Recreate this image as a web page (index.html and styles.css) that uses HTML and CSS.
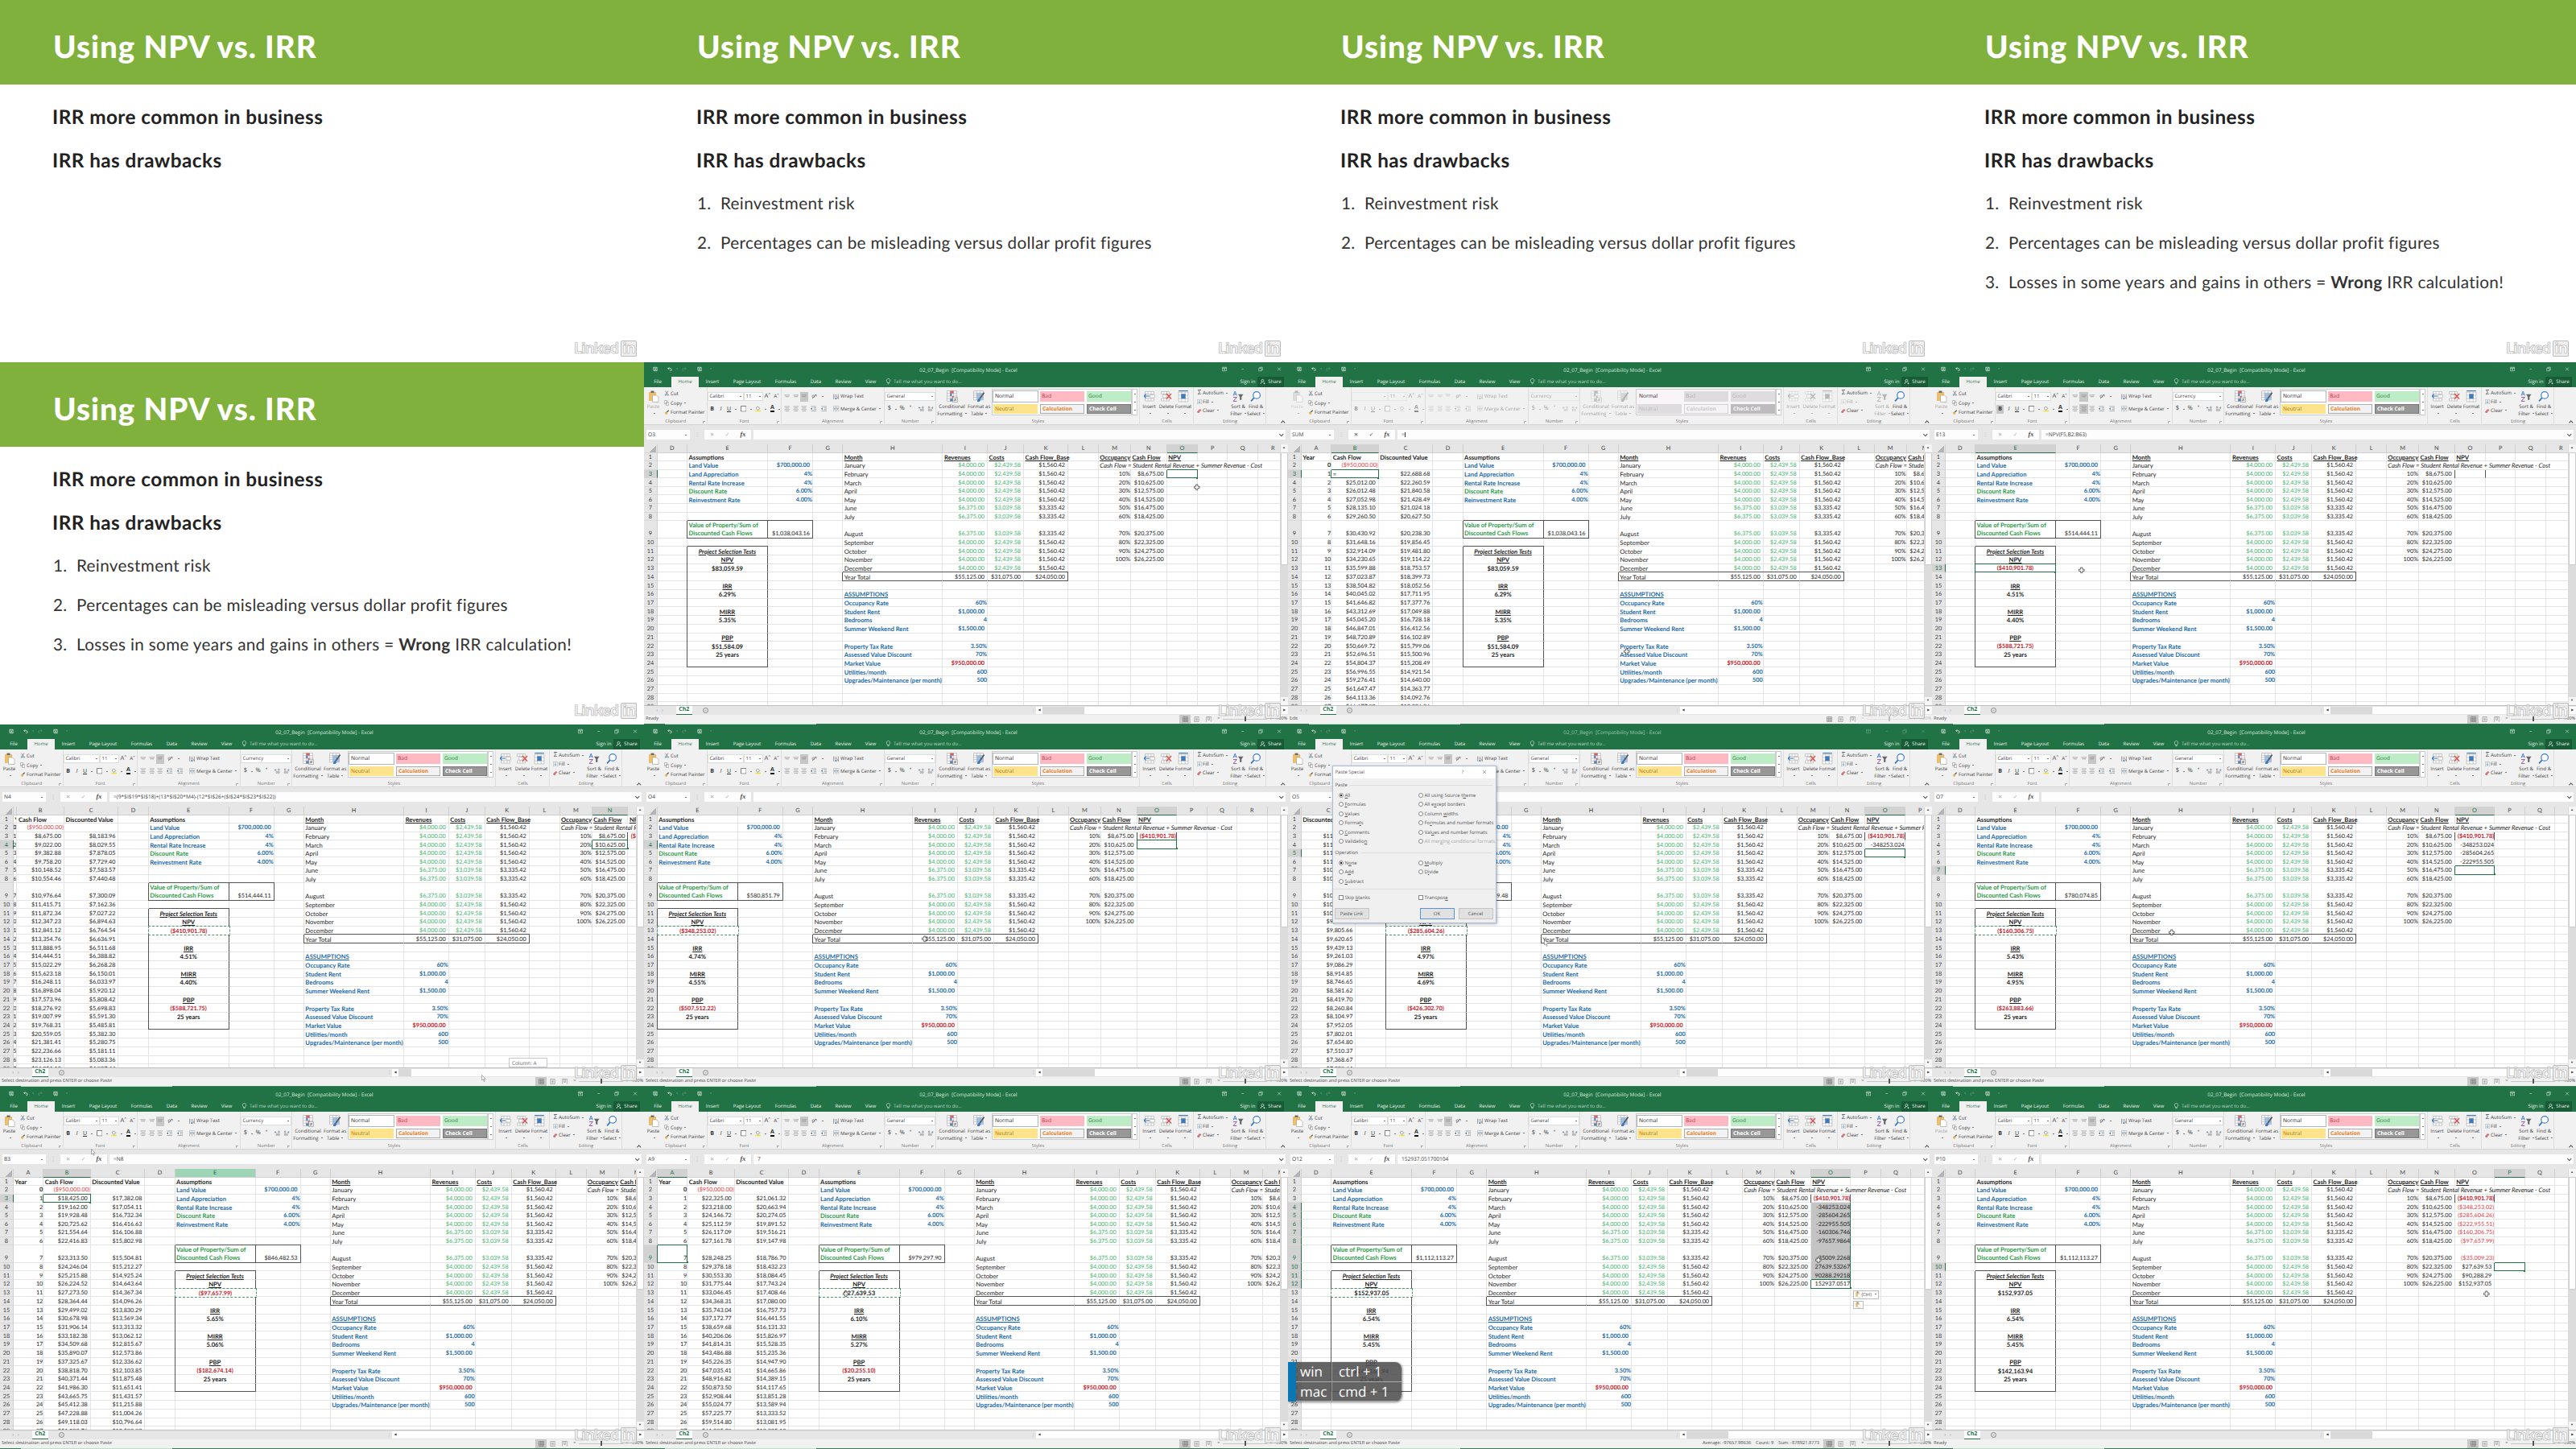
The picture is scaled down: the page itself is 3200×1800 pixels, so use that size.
FILE: index.html
```
<!DOCTYPE html>
<html lang="en">
<head>
    <meta charset="UTF-8">
    <meta name="viewport" content="width=device-width, initial-scale=1.0">
    <title>Using NPV vs. IRR</title>
    <link rel="stylesheet" href="styles.css">
</head>
<body>
    <!-- icons shared by every workbook frame -->
    <svg class="sprite" width="0" height="0">
        <symbol id="save" viewBox="0 0 16 16"><path d="M2 2h12v12H4l-2-2z M5 2v5h6V2 M5 14v-4h6v4" fill="none" stroke="currentColor" stroke-width="1.6"/></symbol>
        <symbol id="undo" viewBox="0 0 16 16"><path d="M6 2L2 6l4 4M2 6h7q5 0 5 4t-5 4" fill="none" stroke="currentColor" stroke-width="2"/></symbol>
        <symbol id="redo" viewBox="0 0 16 16"><path d="M10 2l4 4-4 4M14 6H7q-5 0-5 4t5 4" fill="none" stroke="currentColor" stroke-width="2"/></symbol>
        <symbol id="restore" viewBox="0 0 16 16"><path d="M2 5h9v9H2zM5 5V2h9v9h-3" fill="none" stroke="currentColor" stroke-width="1.4"/></symbol>
        <symbol id="ribbon-opts" viewBox="0 0 16 16"><path d="M1 2h14v12H1zM1 5h14M8 12V7M6 9l2-2 2 2" fill="none" stroke="currentColor" stroke-width="1.5"/></symbol>
        <symbol id="close" viewBox="0 0 16 16"><path d="M3 3l10 10M13 3L3 13" fill="none" stroke="currentColor" stroke-width="1.4"/></symbol>
        <symbol id="bulb" viewBox="0 0 16 20"><path d="M5 14q0-3-2-5a5.500 5.500 0 1 1 10 0q-2 2-2 5zM5.500 17h5" fill="none" stroke="currentColor" stroke-width="1.600"/></symbol>
        <symbol id="person" viewBox="0 0 16 16"><path d="M8 9a3.500 3.500 0 1 0 0-7 3.500 3.500 0 0 0 0 7zM2 15q0-6 6-6M10 13h5M12.500 10.500v5" fill="none" stroke="currentColor" stroke-width="1.600"/></symbol>
        <symbol id="paste" viewBox="0 0 26 30"><path class="board" d="M1 4h18v22H1z"/><path d="M6 1h8v5H6z" fill="#6d6d6d"/><path d="M10 12h10l5 5v12H10z" fill="#fff" stroke="#888"/></symbol>
        <symbol id="cut" viewBox="0 0 16 16"><path d="M4 1l6 10M12 1L6 11" stroke="#555" stroke-width="1.500" fill="none"/><circle cx="4.500" cy="13" r="2" fill="none" stroke="#2f6da8" stroke-width="1.400"/><circle cx="11.500" cy="13" r="2" fill="none" stroke="#2f6da8" stroke-width="1.400"/></symbol>
        <symbol id="copy" viewBox="0 0 16 16"><path d="M1 1h8v9H1zM6 6h8v9H6z" fill="#fff" stroke="#777" stroke-width="1.300"/></symbol>
        <symbol id="brush" viewBox="0 0 16 16"><path d="M1 9l5-4 5 5-4 5z" fill="#e3b55b"/><path d="M8 7l6-6" stroke="#555" stroke-width="3"/></symbol>
        <symbol id="grid" viewBox="0 0 16 16"><path d="M1 1h14v14H1z" fill="#fff" stroke="#555" stroke-width="1.600"/></symbol>
        <symbol id="bucket" viewBox="0 0 18 18"><path d="M3 7l5-5 6 6-6 5z" fill="#fff" stroke="#555" stroke-width="1.400"/><path d="M1 14h16v4H1z" fill="#f4de3a"/></symbol>
        <symbol id="lines" viewBox="0 0 16 16"><path d="M1 2h14M3 6h10M1 10h14M3 14h10" stroke="#8a8a8a" stroke-width="1.300"/></symbol>
        <symbol id="line2" viewBox="0 0 16 16"><path d="M1 4h14M3 8h10" stroke="#8a8a8a" stroke-width="1.500"/></symbol>
        <symbol id="indent" viewBox="0 0 16 16"><path d="M1 2h14M8 6h7M8 10h7M1 14h14" stroke="#8a8a8a" stroke-width="1.400"/><path d="M0 8l4-3v6z" fill="#2f6da8"/></symbol>
        <symbol id="orient" viewBox="0 0 16 16"><path d="M2 13L13 3M9 3h4v4" stroke="#555" stroke-width="1.300" fill="none"/><circle cx="5" cy="7" r="3" fill="none" stroke="#555" stroke-width="1.300"/></symbol>
        <symbol id="wrap" viewBox="0 0 16 16"><path d="M1 1v14M14 1v14M3 4h8M3 8h8q3 3 0 5H6" stroke="#777" stroke-width="1.300" fill="none"/><path d="M8 10v6l-4-3z" fill="#2f6da8"/></symbol>
        <symbol id="merge" viewBox="0 0 16 16"><path d="M1 1h14v14H1zM1 5h14M1 11h14M8 1v4M8 11v4" stroke="#999" fill="#fff"/><path d="M3 8h10M5 6L3 8l2 2M11 6l2 2-2 2" stroke="#2f6da8" fill="none" stroke-width="1.200"/></symbol>
        <symbol id="decimals" viewBox="0 0 18 16"><path d="M0 5h6M3 2L0 5l3 3" stroke="#2f6da8" stroke-width="1.400" fill="none"/><ellipse cx="13" cy="4" rx="2" ry="2.800" fill="none" stroke="#666" stroke-width="1.300"/><ellipse cx="7" cy="12" rx="2" ry="2.800" fill="none" stroke="#666" stroke-width="1.300"/><ellipse cx="13" cy="12" rx="2" ry="2.800" fill="none" stroke="#666" stroke-width="1.300"/></symbol>
        <symbol id="cond" viewBox="0 0 26 28"><path d="M1 1h22v24H1zM1 7h22M1 13h22M1 19h22M8 1v24M16 1v24" fill="#fff" stroke="#999"/><path d="M8 1h8v6H8zM12 13h4v6h-4z" fill="#d8636b"/><path d="M8 7h4v6H8zM8 19h8v6H8z" fill="#4a82bd"/><path d="M14 16h11v11H14z" fill="#fff" stroke="#777"/><path d="M16 20h7M16 23h7M22 18l-5 7" stroke="#444"/></symbol>
        <symbol id="table" viewBox="0 0 26 28"><path d="M1 1h22v21H1zM1 6h22M1 11h22M1 16h22M8 1v21M16 1v21" fill="#fff" stroke="#999"/><path d="M8 6h15v16H8z" fill="#8db4dc" opacity=".8"/><path d="M25 5L15 19" stroke="#555" stroke-width="3"/><path d="M9 26q1-8 6-8 4 4-1 8z" fill="#3c7abf"/></symbol>
        <symbol id="insert" viewBox="0 0 28 26"><path d="M3 1h22v6H3zM10 1v6M18 1v6M3 18h22v6H3zM10 18v6M18 18v6M16 9h11v7H16z" fill="#fff" stroke="#999"/><path d="M0 12h14M5 7l-5 5 5 5" stroke="#3c7abf" fill="none" stroke-width="2.400"/></symbol>
        <symbol id="delete" viewBox="0 0 28 26"><path d="M1 1h20v6H1zM8 1v6M15 1v6M1 18h20v6H1zM8 18v6M15 18v6M5 9h9v7H5z" fill="#fff" stroke="#999"/><path d="M14 6l12 13M26 6L14 19" stroke="#d64b43" fill="none" stroke-width="2.600"/></symbol>
        <symbol id="format" viewBox="0 0 26 28"><path d="M2 4h22v22H2zM2 11h22M2 19h22M9 4v22M17 4v22" fill="#fff" stroke="#999"/><path d="M8 8h10v11H8z" fill="#3c7abf"/><path d="M2 1h22" stroke="#3c7abf" stroke-width="2"/></symbol>
        <symbol id="fill" viewBox="0 0 16 16"><path d="M1 1h14v14H1z" fill="#fff" stroke="#777"/><path d="M8 3v8M5 8l3 4 3-4" stroke="#3c7abf" fill="none" stroke-width="1.800"/></symbol>
        <symbol id="clear" viewBox="0 0 16 14"><path d="M1 9l8-8 6 3-8 8z" fill="#d8707f"/><path d="M1 9l6 3v2L1 12z" fill="#a33c50"/></symbol>
        <symbol id="sort" viewBox="0 0 26 26"><path d="M13 8h12l-4 6v7h-4v-7z" fill="#666"/><path d="M2 11L6 1l4 10M3 8h6" stroke="#3c7abf" fill="none" stroke-width="1.700"/><path d="M2 15h8L2 24h8" stroke="#8a4fa0" fill="none" stroke-width="1.700"/></symbol>
        <symbol id="find" viewBox="0 0 26 26"><circle cx="15" cy="10" r="8" fill="#fff" stroke="#3c7abf" stroke-width="2.200"/><path d="M9 16l-7 8" stroke="#3c7abf" stroke-width="3.200"/></symbol>
        <symbol id="view-grid" viewBox="0 0 16 16"><path d="M1 1h14v14H1zM1 6h14M1 10.500h14M6 1v14M10.500 1v14" fill="none" stroke="#666" stroke-width="1.200"/></symbol>
        <symbol id="view-page" viewBox="0 0 16 16"><path d="M2 1h12v14H2zM5 5h6M5 8h6M5 11h6" fill="none" stroke="#777" stroke-width="1.200"/></symbol>
        <symbol id="view-break" viewBox="0 0 16 16"><path d="M1 15V1h14v14M6 1v9h4V1" fill="none" stroke="#777" stroke-width="1.200"/></symbol>
        <symbol id="cross" viewBox="0 0 18 18"><path d="M6 1h5v5h5v5h-5v5H6v-5H1V6h5z" fill="#fff" stroke="#333" stroke-width="1.600"/></symbol>
        <symbol id="arrow" viewBox="0 0 12 18"><path d="M1 1v13l3-3 2.500 6 2-1L6 10.500h4.500z" fill="#fff" stroke="#666" stroke-width="1"/></symbol>
    </svg>

    <main class="wall">
        <section class="slide">
            <h1>Using NPV vs. IRR</h1>
            <h2>IRR more common in business</h2>
            <h2>IRR has drawbacks</h2>
            <div class="watermark">Linked<span>in</span></div>
        </section>
        <section class="slide">
            <h1>Using NPV vs. IRR</h1>
            <h2>IRR more common in business</h2>
            <h2>IRR has drawbacks</h2>
            <ol>
                <li>Reinvestment risk</li>
                <li>Percentages can be misleading versus dollar profit figures</li>
            </ol>
            <div class="watermark">Linked<span>in</span></div>
        </section>
        <section class="slide">
            <h1>Using NPV vs. IRR</h1>
            <h2>IRR more common in business</h2>
            <h2>IRR has drawbacks</h2>
            <ol>
                <li>Reinvestment risk</li>
                <li>Percentages can be misleading versus dollar profit figures</li>
            </ol>
            <div class="watermark">Linked<span>in</span></div>
        </section>
        <section class="slide">
            <h1>Using NPV vs. IRR</h1>
            <h2>IRR more common in business</h2>
            <h2>IRR has drawbacks</h2>
            <ol>
                <li>Reinvestment risk</li>
                <li>Percentages can be misleading versus dollar profit figures</li>
                <li>Losses in some years and gains in others = <b>Wrong</b> IRR calculation!</li>
            </ol>
            <div class="watermark">Linked<span>in</span></div>
        </section>
        <section class="slide">
            <h1>Using NPV vs. IRR</h1>
            <h2>IRR more common in business</h2>
            <h2>IRR has drawbacks</h2>
            <ol>
                <li>Reinvestment risk</li>
                <li>Percentages can be misleading versus dollar profit figures</li>
                <li>Losses in some years and gains in others = <b>Wrong</b> IRR calculation!</li>
            </ol>
            <div class="watermark">Linked<span>in</span></div>
        </section>
    </main>
    <script src="script.js"></script>
</body>
</html>
```
FILE: styles.css
```
* {
    box-sizing: border-box;
}
body {
    margin: 0;
    background: #fff;
    text-rendering: geometricPrecision;
}
.sprite {
    position: absolute;
}
.wall {
    width: 3200px;
    display: grid;
    grid-template-columns: repeat(4, 800px);
    grid-auto-rows: 450px;
}

/* slides */
.slide {
    position: relative;
    background: #fff;
    color: #222;
    font-family: Lato, sans-serif;
    overflow: hidden;
}
.slide h1 {
    height: 105px;
    margin: 0 0 14px;
    padding: 6px 0 0 66px;
    background: #7fb13c;
    color: #fff;
    font-size: 38.5px;
    font-weight: 900;
    letter-spacing: 1px;
    line-height: 105px;
}
.slide h2 {
    margin: 0;
    padding-left: 65px;
    height: 54px;
    font-size: 24.3px;
    font-weight: 700;
    letter-spacing: 0.45px;
    line-height: 54px;
}
.slide ol {
    margin: 2px 0 0 66px;
    padding: 0;
    list-style: none;
    counter-reset: item;
    font-size: 20.7px;
    letter-spacing: 0.33px;
    line-height: 49px;
    color: #333;
}
.slide li {
    display: flex;
    white-space: pre;
}
.slide li::before {
    counter-increment: item;
    content: counter(item) ".";
    width: 29px;
}
.watermark {
    position: absolute;
    right: 9px;
    bottom: 7px;
    display: flex;
    align-items: center;
    gap: 3px;
    font: bold 18.5px/20px "Open Sans", sans-serif;
    letter-spacing: -1.2px;
    color: rgba(240, 240, 240, 0.9);
    -webkit-text-stroke: 0.6px rgba(150, 150, 150, 0.8);
}
.watermark span {
    width: 20px;
    height: 20px;
    line-height: 18px;
    text-align: center;
    background: rgba(235, 235, 235, 0.8);
    border: 1px solid rgba(165, 165, 165, 0.7);
    border-radius: 2px;
    color: #fff;
}

/* workbook window */
.book {
    position: relative;
    height: 450px;
    overflow: hidden;
    display: flex;
    flex-direction: column;
    background: #e6e6e6;
    font: 6.1px/1 "Open Sans", sans-serif;
    color: #444;
    white-space: nowrap;
}
.titlebar {
    height: 17.5px;
    display: grid;
    grid-template-columns: 22px 14px 4px 14px 24px 4px 1fr 23px 23px 22px 23px;
    align-items: center;
    justify-items: center;
    padding: 0 0 1px 3px;
    background: #217346;
    color: #e9f3ed;
}
.titlebar svg {
    width: 6px;
    height: 7px;
}
.titlebar .faint {
    opacity: 0.25;
}
.titlebar .name {
    padding: 3px 0 0 12px;
    font-size: 6.3px;
    color: #d3e6da;
}
.inactive .titlebar .name {
    color: #9cc4ad;
}
.inactive .win {
    opacity: 0.35;
}
.tabs {
    height: 13.5px;
    display: grid;
    grid-template-columns: 34px 34px 34px 52px 44px 31px 37px 31px 13px 1fr 24px 33px;
    align-items: center;
    justify-items: center;
    padding-right: 5px;
    background: #217346;
    color: #e4f1e9;
}
.tabs .active {
    height: 100%;
    width: 100%;
    display: grid;
    place-items: center;
    background: #f1f1f1;
    color: #3c7a57;
}
.tabs svg {
    width: 7px;
    height: 8px;
}
.tabs .tell {
    justify-self: start;
    color: #b3d1c0;
}
.tabs .share {
    width: 100%;
    height: 12.5px;
    display: flex;
    align-items: center;
    justify-content: center;
    gap: 3px;
    background: #185c37;
}
.ribbon {
    height: 47px;
    display: grid;
    grid-template-columns: 78.5px 92px 128px 64.5px 253px 67px 90px 27px;
    background: #f1f1f1;
    border-bottom: 1px solid #d5d5d5;
}
.group {
    display: flex;
    flex-direction: column;
    border-right: 1px solid #dedede;
}
.group:last-child {
    border: 0;
}
.group .body {
    height: 38px;
    display: grid;
    align-content: start;
}
.group .label {
    height: 9px;
    display: grid;
    grid-template-columns: 1fr 7px;
    align-items: center;
    justify-items: center;
    padding: 1px 0 0 8px;
    font-size: 5.7px;
    color: #777;
}
.label i {
    width: 3px;
    height: 3px;
    border-left: 1px solid #aaa;
    border-top: 1px solid #aaa;
}
.line {
    display: grid;
    align-items: center;
    justify-items: center;
    height: 13px;
}
.dd::after {
    content: "";
    display: inline-block;
    width: 2px;
    height: 1px;
    margin: 0 0 1.5px 3px;
    background: #777;
}
.pick {
    width: 2px;
    height: 1px;
    background: #777;
}
.big {
    display: grid;
    justify-items: center;
    align-content: start;
    grid-template-rows: 18px 8.5px 8.5px;
    align-items: center;
    padding-top: 2px;
}
.big svg {
    width: 14px;
    height: 15px;
}
.clip .body {
    grid-template-columns: 23px 1fr;
}
.clip .list {
    padding-top: 2px;
}
.clip .line {
    grid-template-columns: 10px auto;
    justify-content: start;
    height: 11.8px;
}
.clip svg.s {
    width: 6.5px;
    height: 7px;
}
.board {
    fill: #ecbf6b;
}
.nopaste .board {
    fill: #d5d5d5;
}
.nopaste .paste {
    color: #aaa;
}
.combo {
    width: 100%;
    height: 11.5px;
    display: flex;
    align-items: center;
    justify-content: space-between;
    padding: 0 2px;
    background: #fff;
    border: 0.5px solid #ddd;
}
.font .body,
.align .body,
.num .body {
    padding-top: 5px;
    row-gap: 2.5px;
}
.font .l1 {
    grid-template-columns: 45px 24px 12px 10px;
}
.font .l2 {
    grid-template-columns: 12px 10px 10px 6px 14px 4px 15px 3px 14px 3px;
    font-size: 7px;
    color: #333;
}
.font .l1 .grow {
    font-size: 7.5px;
}
.font .ink {
    border-bottom: 2px solid #111;
    line-height: 6px;
}
.font .on {
    width: 9px;
    height: 11px;
    display: grid;
    place-items: center;
    background: #c6c6c6;
}
.line svg {
    width: 7.5px;
    height: 7.5px;
}
.align .l1 {
    grid-template-columns: 10.5px 10.5px 10.5px 15px 5px 10px 10px auto;
    justify-content: start;
    padding-left: 2px;
}
.align .l2 {
    grid-template-columns: 10.5px 10.5px 10.5px 14px 11px 5px 10px auto;
    justify-content: start;
    padding-left: 2px;
}
.align .on {
    width: 10.5px;
    height: 12px;
    display: grid;
    place-items: center;
    background: #c6c6c6;
}
.flip {
    transform: scaleX(-1);
}
.num .l2 {
    grid-template-columns: 13px 3px 12px 9px 4px 11px 11px;
    font-size: 7.5px;
}
.styles .body {
    grid-template-columns: 39px 28px 2px 174px 7px;
}
.gallery {
    height: 33px;
    margin-top: 2px;
    padding: 2px 1px;
    display: grid;
    grid-template-columns: repeat(3, 55px);
    grid-template-rows: 12.5px 12.5px;
    gap: 3px;
    background: #fff;
    border: 0.5px solid #ccc;
}
.gallery span {
    padding: 3px 2px 0;
    font-size: 6.6px;
}
.gallery .normal {
    color: #222;
    outline: 1.3px solid #b5b5b5;
}
.gallery .bad {
    background: #ffb9c2;
    color: #b53a4a;
}
.gallery .good {
    background: #bdecc6;
    color: #2c7d3c;
}
.gallery .neutral {
    background: #fde48c;
    color: #a57516;
}
.gallery .calc {
    background: #f2f2f2;
    color: #e8811f;
    border: 0.7px solid #aaa;
    font-weight: bold;
    padding-top: 2px;
}
.gallery .check {
    background: #979797;
    color: #fff;
    border: 1px solid #777;
    font-weight: bold;
    padding-top: 2px;
}
.spin {
    height: 33px;
    margin-top: 2px;
    display: flex;
    flex-direction: column;
    justify-content: space-around;
    align-items: center;
    background: #fff;
    border: 0.5px solid #ccc;
}
.cells .body {
    grid-template-columns: 23px 20px 22px;
}
.edit .body {
    grid-template-columns: 44px 22px 22px;
}
.edit .list {
    padding: 2px 0 0 3px;
}
.edit .line {
    grid-template-columns: 8px auto;
    justify-content: start;
    height: 10.8px;
}
.edit .sigma {
    font-size: 8px;
}
.edit .line svg {
    width: 6px;
    height: 6.5px;
}
.tail {
    flex-direction: row;
    align-items: flex-end;
    justify-content: flex-end;
    padding: 0 4px 2px 0;
}
.chev {
    width: 3.5px;
    height: 3.5px;
    margin: 0 1px;
    border: solid #555;
    border-width: 1px 0 0 1px;
    transform: rotate(45deg);
}
.chev.down {
    transform: rotate(225deg);
}
.editing .dim,
.editing .gallery span {
    filter: grayscale(1);
    opacity: 0.45;
}
.editing .combo,
.editing .gallery {
    background: #f8f4f8;
}
.editing .gallery .bad,
.editing .gallery .good,
.editing .gallery .neutral {
    background: #c3bfc3;
}
.editing .gallery .check {
    background: #777;
}
.editing .gallery .normal {
    filter: none;
    opacity: 1;
    outline: 0;
}

/* formula bar */
.formula {
    height: 24px;
    display: grid;
    grid-template-columns: 54px 18px 58px 3px 661px;
    justify-content: start;
    align-items: center;
    padding: 0 0 0 3px;
}
.formula > div {
    height: 12px;
    display: flex;
    align-items: center;
    background: #fdfdfd;
    font-size: 6.6px;
}
.formula > div.dots {
    background: none;
    justify-content: center;
    color: #aaa;
}
.formula .ref {
    justify-content: space-between;
    padding: 0 4px 0 2px;
}
.formula .fx {
    justify-content: space-around;
    color: #aaa;
}
.formula .fx i {
    color: #444;
    font-family: "Liberation Serif", serif;
    font-weight: bold;
    font-size: 8px;
}
.editing .formula .fx {
    color: #444;
}
.formula .text {
    grid-column: 5;
    justify-content: space-between;
    padding: 0 3px 0 5px;
}
.caret {
    border-right: 0.6px solid #333;
}

/* sheet */
.pane {
    height: 324px;
    display: flex;
}
.grid {
    width: 790px;
    overflow: hidden;
    background: #fff;
    font-family: Lato, sans-serif;
    font-size: 7.65px;
    color: #222;
}
.row {
    display: flex;
    width: 1200px;
    height: 10.73px;
}
.row.top {
    height: 10.58px;
}
.row.tall {
    height: 21.4px;
}
.row.head {
    height: 10.6px;
}
.cell {
    flex: none;
    height: 100%;
    display: flex;
    align-items: flex-end;
    padding: 0 1.5px;
    border-right: 1px solid #e4e4e4;
    border-bottom: 1px solid #e4e4e4;
    line-height: 8.4px;
    width: var(--w);
}
.head .cell,
.cell.no {
    background: #e6e6e6;
    border-color: #cfcfcf;
    justify-content: center;
    padding: 0;
    font-size: 7.3px;
    color: #444;
}
.cell.no {
    width: 16.8px;
    border-bottom-color: #d8d8d8;
}
.head .cell.hot,
.cell.no.hot {
    background: #d2d2d2;
    color: #217346;
}
.head .cell.hot {
    border-bottom: 1.5px solid #217346;
}
.cell.no.hot {
    border-right: 1.5px solid #217346;
}
.head .cell.over {
    background: #9fd5b7;
    color: #217346;
}
.corner {
    width: 9px;
    height: 8px;
    margin-left: 5px;
    background: linear-gradient(135deg, transparent 50%, #b4b4b4 50%);
}
.w-A { --w: 37.5px; }
.w-B { --w: 58.5px; }
.w-C { --w: 67.6px; }
.w-D { --w: 37.2px; }
.w-E { --w: 100px; }
.w-F { --w: 56px; }
.w-G { --w: 37.2px; }
.w-H { --w: 124.3px; }
.w-I { --w: 55.6px; }
.w-J { --w: 45px; }
.w-K { --w: 55px; }
.w-L { --w: 38.2px; }
.w-M { --w: 39.8px; }
.w-N { --w: 44.7px; }
.w-O { --w: 38.2px; }
.wide .w-O { --w: 49.5px; }
.w-P, .w-Q, .w-R, .w-S { --w: 37.5px; }
.shifted .w-A {
    --w: 4.6px;
    overflow: hidden;
}
.cell.r { justify-content: flex-end; padding-right: 0; font-size: 7.25px; }
.cell.m { justify-content: flex-end; padding-right: 3px; font-size: 7.25px; }
.cell.c { justify-content: center; }
.cell.b { font-weight: 700; }
.cell.i { font-style: italic; }
.cell.u span { text-decoration: underline; }
.cell.blue { color: #1b6aa6; }
.cell.grn { color: #1f9d45; }
.cell.rev { color: #3fb36d; }
.cell.red { color: #c4161f; font-size: 7.25px; }
.cell.loss { color: #da3c46; }
.cell.note { padding-left: 1px; }
.cell.note span {
    background: #fff;
    z-index: 1;
}
.cell.note.i {
    font-size: 7.75px;
}
.cell.two {
    white-space: pre;
    line-height: 10.4px;
}
.cell.bl { box-shadow: -1px 0 0 #555; }
.cell.br { border-right-color: #555; }
.cell.bb { border-bottom-color: #555; }
.cell.bt { box-shadow: 0 -1px 0 #555; }
.cell.bl.bt { box-shadow: -1px 0 0 #555, 0 -1px 0 #555; }
.cell.sel {
    position: relative;
    border-color: #217346;
    box-shadow: -1px 0 0 #217346, 0 -1px 0 #217346;
    z-index: 2;
}
.cell.sel::after {
    content: "";
    position: absolute;
    right: -1.5px;
    bottom: -1.5px;
    width: 2px;
    height: 2px;
    background: #217346;
}
.cell.ants {
    border: 0;
    outline: 1px dashed #4f9470;
    outline-offset: -0.5px;
    line-height: 9.4px;
    box-shadow: none;
}
.cell.shade {
    background: #c4c4c4;
    border-color: #c4c4c4;
    border-right-color: #217346;
}
.vscroll {
    width: 10px;
    display: flex;
    flex-direction: column;
    align-items: center;
    background: #dcdcdc;
}
.vscroll .btn {
    width: 9px;
    height: 10px;
    background: #f6f6f6;
    display: grid;
    place-items: center;
    font-size: 4px;
}
.vscroll .thumb {
    width: 9px;
    height: 140px;
    margin-bottom: auto;
    background: #fdfdfd;
    border: 0.5px solid #ccc;
}

/* tab strip and status bar */
.strip {
    height: 12px;
    display: grid;
    grid-template-columns: 39.5px 20.5px 33px 1fr 7px 8px 296px 9px;
    align-items: center;
    justify-items: center;
    border-top: 1px solid #bdbdbd;
    color: #999;
}
.strip .sheet {
    width: 100%;
    height: 11px;
    background: #fff;
    border-bottom: 1.3px solid #217346;
    color: #217346;
    font-size: 7px;
    font-weight: bold;
    line-height: 10px;
    text-align: center;
}
.strip .plus {
    width: 7px;
    height: 7px;
    border: 0.7px solid #888;
    border-radius: 50%;
    line-height: 5.5px;
    text-align: center;
}
.strip .btn {
    width: 8px;
    height: 9px;
    background: #fdfdfd;
    font-size: 4px;
    line-height: 9px;
    text-align: center;
    color: #444;
}
.strip .track {
    width: 100%;
    height: 9px;
    background: #d9d9d9;
    display: flex;
    justify-content: flex-end;
}
.strip .thumb {
    height: 9px;
    background: #fdfdfd;
}
.status {
    height: 10.5px;
    display: grid;
    grid-template-columns: 515px 150px 14px 15px 15px 10px 55px 10px 1fr;
    align-items: center;
    justify-items: center;
    background: #f1f1f1;
    font-size: 5.7px;
}
.status .msg {
    justify-self: start;
    padding-left: 2px;
}
.status .sum {
    justify-self: start;
    white-space: pre;
}
.status svg {
    width: 7px;
    height: 7px;
}
.status .on {
    width: 14px;
    height: 10.5px;
    display: grid;
    place-items: center;
    background: #c8c8c8;
}
.status .zoom {
    width: 100%;
    display: grid;
    place-items: center;
    height: 7px;
    background: linear-gradient(#aaa, #aaa) center / 100% 0.6px no-repeat;
}
.status .zoom i {
    width: 2px;
    height: 6px;
    background: #555;
}
.editing .status .on {
    background: none;
}
.editing .status .z {
    opacity: 0.35;
}
.base {
    height: 1.5px;
    background: linear-gradient(90deg, #2f7b53 26px, #b9dfc8 26px 214px, #2f7b53 214px);
}

/* things floating above the sheet */
.pointer {
    position: absolute;
    width: 8px;
    height: 9px;
}
.pointer.arrow {
    width: 6px;
    height: 9px;
}
.tip {
    position: absolute;
    left: 632px;
    top: 414px;
    width: 48px;
    height: 12px;
    background: #fff;
    border: 0.6px solid #c8c8c8;
    line-height: 11px;
    padding-left: 3px;
    font-size: 6.4px;
    color: #666;
}
.paste-tags {
    position: absolute;
    left: 702px;
    top: 253px;
    display: grid;
    gap: 2px;
}
.paste-tags div {
    height: 10.5px;
    display: flex;
    align-items: center;
    gap: 1px;
    justify-self: start;
    padding: 0 2px;
    background: #fff;
    border: 0.5px solid #bbb;
    font-size: 5.5px;
}
.paste-tags svg {
    width: 6.5px;
    height: 8px;
}
.keys {
    position: absolute;
    left: 0;
    top: 342px;
    width: 141px;
    height: 49px;
    display: grid;
    grid-template-columns: 45px 1fr;
    grid-template-rows: 24.5px 24.5px;
    border-left: 10px solid #0a77b5;
    border-radius: 0 8px 8px 0;
    background: rgba(78, 78, 78, 0.88);
    box-shadow: 1px 1px 3px rgba(0, 0, 0, 0.5);
    color: #fff;
    font: 17px/23px "Open Sans", sans-serif;
    overflow: hidden;
}
.keys span {
    padding-left: 8px;
    border-bottom: 0.6px solid #aaa;
}
.keys span:nth-child(odd) {
    padding-left: 5px;
    border-right: 1px solid #999;
}
.dialog {
    position: absolute;
    left: 54.5px;
    top: 50.5px;
    width: 204px;
    height: 196px;
    background: #f0f0f0;
    border: 1px solid #a9bdd6;
    box-shadow: 1px 1px 3px rgba(0, 0, 0, 0.3);
    font-size: 6px;
    color: #555;
}
.dialog .bar {
    height: 15.5px;
    display: grid;
    grid-template-columns: 1fr 25px 15px;
    align-items: center;
    padding: 0 2px 0 3px;
    background: #fff;
}
.dialog .bar svg {
    width: 6px;
    height: 6px;
}
.dialog .cap {
    height: 16px;
    display: flex;
    align-items: center;
    gap: 3px;
    padding-left: 3px;
}
.dialog .cap::after {
    content: "";
    flex: 1;
    height: 0.6px;
    margin-right: 4px;
    background: #ddd;
}
.dialog .opts {
    display: grid;
    grid-template-columns: 99px 1fr;
    grid-auto-rows: 11.5px;
    align-items: center;
    padding: 0 0 0 7px;
    margin-top: -1px;
}
.dialog .opts.checks {
    height: 19px;
    margin-top: 3.5px;
    border-top: 0.6px solid #ddd;
    grid-auto-rows: 19px;
}
.dialog label {
    display: flex;
    align-items: center;
    gap: 2px;
}
.dialog label i {
    width: 6px;
    height: 6px;
    border: 0.7px solid #888;
    border-radius: 50%;
    background: #fff;
}
.dialog label.on i {
    background: radial-gradient(#222 40%, #fff 45%);
}
.dialog label.off {
    color: #aaa;
}
.dialog .checks i {
    border-radius: 0;
}
.dialog .btns {
    display: grid;
    grid-template-columns: 43px 53px 43px 43px;
    column-gap: 5px;
    height: 13.5px;
    margin: 5px 0 0 2px;
}
.dialog .btns span {
    display: grid;
    place-items: center;
    background: #e1e1e1;
    border: 0.6px solid #c4c4c4;
}
.dialog .btns .ok {
    grid-column: 3;
    border: 1px solid #5b95d0;
}
```
FILE: script.js
```
var LETTERS = 'ABCDEFGHIJKLMNOPQRS'.split('');
var MONTHS = ['January', 'February', 'March', 'April', 'May', 'June', 'July', 'August', 'September', 'October', 'November', 'December'];
var LOSSES = { O3: ['($410,901.78)', 'b red r'] };

// One entry per workbook frame
var frames = [
    { from: 'D', ref: 'O3', text: '', base: 24050, value: '$1,038,043.16', npv: '$83,059.59', irr: '6.29%', mirr: '5.35%', pbp: '$51,584.09',
      format: 'General', thumb: 244, msg: 'Ready', nopaste: true, pointer: ['cross', 683, 151] },
    { from: 'A', ref: 'B3', name: 'SUM', text: '=', base: 24050, value: '$1,038,043.16', npv: '$83,059.59', irr: '6.29%', mirr: '5.35%', pbp: '$51,584.09',
      format: 'Currency', thumb: 296, msg: 'Edit', nopaste: true, editing: true, pointer: ['cross', 417, 355] },
    { from: 'D', ref: 'E13', text: '=NPV(F5,B2:B63)', base: 8675, value: '$514,444.11', npv: '($410,901.78)', irr: '4.51%', mirr: '4.40%', pbp: '($588,721.75)',
      format: 'Currency', thumb: 244, msg: 'Ready', nopaste: true, bold: true, pointer: ['cross', 182, 254] },
    { from: 'A', shifted: true, ref: 'N4', text: '=(9*$I$19*$I$18)+(13*$I$20*M4)-(12*$I$26+($I$24*$I$23*$I$22))', base: 8675, value: '$514,444.11', npv: '($410,901.78)', irr: '4.51%', mirr: '4.40%', pbp: '($588,721.75)',
      format: 'Currency', thumb: 280, ants: true, wide: true, cells: LOSSES, tip: 'Column: A', pointer: ['arrow', 598, 435] },
    { from: 'E', ref: 'O4', text: '', base: 10625, value: '$580,851.79', npv: '($348,253.02)', irr: '4.74%', mirr: '4.55%', pbp: '($507,512.22)',
      format: 'General', thumb: 231, ants: true, wide: true, cells: LOSSES, pointer: ['cross', 345, 262] },
    { from: 'C', ref: 'O5', text: '', base: 12575, value: '$647,259.48', npv: '($285,604.26)', irr: '4.97%', mirr: '4.69%', pbp: '($426,302.70)',
      format: 'General', thumb: 257, ants: true, wide: true, dialog: true, pointer: ['arrow', 318, 267],
      cells: { O3: LOSSES.O3, O4: ['-348253.024', 'r'] } },
    { from: 'D', ref: 'O7', text: '', base: 16475, value: '$780,074.85', npv: '($160,306.75)', irr: '5.43%', mirr: '4.95%', pbp: '($263,883.66)',
      format: 'General', thumb: 244, ants: true, wide: true, pointer: ['cross', 294, 254],
      cells: { O3: LOSSES.O3, O4: ['-348253.024', 'r'], O5: ['-285604.265', 'r'], O6: ['-222955.505', 'r'] } },
    { from: 'A', ref: 'B3', text: '=N8', base: 18425, value: '$846,482.53', npv: '($97,657.99)', irr: '5.65%', mirr: '5.06%', pbp: '($182,674.14)',
      format: 'Currency', thumb: 296, ants: true, over: 'E', pointer: ['arrow', 113, 77] },
    { from: 'A', ref: 'A9', text: '7', base: 22325, value: '$979,297.90', npv: '$27,639.53', irr: '6.10%', mirr: '5.27%', pbp: '($20,255.10)',
      format: 'General', thumb: 296, ants: true, pointer: ['cross', 247, 253] },
    { from: 'D', ref: 'O12', text: '152937.051700104', base: 26225, value: '$1,112,113.27', npv: '$152,937.05', irr: '6.54%', mirr: '5.45%', pbp: '$142,163.94',
      format: 'General', thumb: 244, ants: true, wide: true, keys: true, pointer: ['cross', 655, 211],
      sum: 'Average: -97657.98636    Count: 9    Sum: -878921.8773', hotRows: [4, 12],
      cells: { O3: LOSSES.O3, O4: ['-348253.024', 'r shade'], O5: ['-285604.265', 'r shade'], O6: ['-222955.505', 'r shade'], O7: ['-160306.746', 'r shade'],
               O8: ['-97657.9864', 'r shade'], O9: ['-35009.2268', 'r shade'], O10: ['27639.53267', 'r shade'], O11: ['90288.29218', 'r shade'], O12: ['152937.0517', 'r'] } },
    { from: 'D', ref: 'P10', text: '', base: 26225, value: '$1,112,113.27', npv: '$152,937.05', irr: '6.54%', mirr: '5.45%', pbp: '$142,163.94',
      format: 'General', thumb: 244, msg: 'Ready', nopaste: true, wide: true, pointer: ['cross', 685, 253],
      cells: { O3: LOSSES.O3, O4: ['($348,253.02)', 'loss r'], O5: ['($285,604.26)', 'loss r'], O6: ['($222,955.51)', 'loss r'], O7: ['($160,306.75)', 'loss r'],
               O8: ['($97,657.99)', 'loss r'], O9: ['($35,009.23)', 'loss r'], O10: ['$27,639.53', 'm'], O11: ['$90,288.29', 'm'], O12: ['$152,937.05', 'm'] } }
];

function icon(id, cls) {
    return '<svg class="' + (cls || '') + '"><use href="#' + id + '"/></svg>';
}

function money(n) {
    return '$' + n.toLocaleString('en-US', { minimumFractionDigits: 2, maximumFractionDigits: 2 });
}

function sign(text) {
    return text.charAt(0) === '(' ? ' red' : '';
}

function sheetCells(f) {
    var c = {
        A1: ['Year', 'b'], B1: ['Cash Flow', 'b'], C1: ['Discounted Value', 'b'], E1: ['Assumptions', 'b'],
        H1: ['Month', 'b u'], I1: ['Revenues', 'b u'], J1: ['Costs', 'b u'], K1: ['Cash Flow_Base', 'b u'],
        M1: ['Occupancy', 'b u note'], N1: ['Cash Flow', 'b u'], O1: ['NPV', 'b u'],
        A2: ['0', 'b r'], B2: ['($950,000.00)', 'r loss'],
        E2: ['Land Value', 'b blue'], F2: ['$700,000.00', 'b blue m'],
        E3: ['Land Appreciation', 'b blue'], F3: ['4%', 'b blue r'],
        E4: ['Rental Rate Increase', 'b blue'], F4: ['4%', 'b blue r'],
        E5: ['Discount Rate', 'b grn'], F5: ['6.00%', 'b blue r'],
        E6: ['Reinvestment Rate', 'b blue'], F6: ['4.00%', 'b blue r'],
        M2: ['Cash Flow = Student Rental Revenue + Summer Revenue - Cost', 'i note'],
        E9: ['Value of Property/Sum of\nDiscounted Cash Flows', 'b grn two bl br bb bt'], F9: [f.value, 'm br bb bt'],
        E11: ['Project Selection Tests', 'b i u c bl bt br'], E12: ['NPV', 'b u c bl br'], E13: [f.npv, 'b c bl br' + sign(f.npv)],
        E14: ['', 'bl br'], E15: ['IRR', 'b u c bl br'], E16: [f.irr, 'b c bl br'], E17: ['', 'bl br'],
        E18: ['MIRR', 'b u c bl br'], E19: [f.mirr, 'b c bl br'], E20: ['', 'bl br'],
        E21: ['PBP', 'b u c bl br'], E22: [f.pbp, 'b c bl br' + sign(f.pbp)], E23: ['25 years', 'b c bl br'], E24: ['', 'bl br bb'],
        H14: ['Year Total', 'bl bt bb'], I14: ['$55,125.00', 'm bt bb'], J14: ['$31,075.00', 'm bt bb'], K14: ['$24,050.00', 'm bt bb br'],
        H16: ['ASSUMPTIONS', 'b u blue'],
        H17: ['Occupancy Rate', 'b blue'], I17: ['60%', 'b blue r'],
        H18: ['Student Rent', 'b blue'], I18: ['$1,000.00', 'b blue m'],
        H19: ['Bedrooms', 'b blue'], I19: ['4', 'b blue r'],
        H20: ['Summer Weekend Rent', 'b blue'], I20: ['$1,500.00', 'b blue m'],
        H22: ['Property Tax Rate', 'b blue'], I22: ['3.50%', 'b blue r'],
        H23: ['Assessed Value Discount', 'b blue'], I23: ['70%', 'b blue r'],
        H24: ['Market Value', 'b blue'], I24: ['$950,000.00', 'b red m'],
        H25: ['Utilities/month', 'b blue'], I25: ['600', 'b blue r'],
        H26: ['Upgrades/Maintenance (per month)', 'b blue'], I26: ['500', 'b blue r'],
        O3: ['', 'bl br']
    };
    MONTHS.forEach(function (month, i) {
        var summer = i > 4 && i < 8;
        c['H' + (i + 2)] = [month, ''];
        c['I' + (i + 2)] = [summer ? '$6,375.00' : '$4,000.00', 'm rev'];
        c['J' + (i + 2)] = [summer ? '$3,039.58' : '$2,439.58', 'm rev'];
        c['K' + (i + 2)] = [summer ? '$3,335.42' : '$1,560.42', 'm'];
    });
    for (var k = 0; k < 10; k++) {
        c['M' + (k + 3)] = [(k + 1) * 10 + '%', 'r'];
        c['N' + (k + 3)] = [money(8675 + 1950 * k), 'm'];
    }
    for (k = 0; k < 27; k++) {
        var flow = f.base * Math.pow(1.04, k);
        c['A' + (k + 3)] = [k + 1, 'r'];
        c['B' + (k + 3)] = [money(flow), 'm'];
        c['C' + (k + 3)] = [money(flow / Math.pow(1.06, k + 1)), 'm'];
    }
    for (var key in f.cells) {
        c[key] = [f.cells[key][0], f.cells[key][1] + (key === 'O3' ? ' bl br' : '')];
    }
    if (f.editing) c.B3 = ['=', ''];
    if (f.ants) c.E13[1] += ' ants';
    c[f.ref] = c[f.ref] || ['', ''];
    c[f.ref][1] += ' sel';
    return c;
}

function sheet(f) {
    var cells = sheetCells(f);
    var cols = LETTERS.slice(LETTERS.indexOf(f.from));
    var hotCol = f.ref.charAt(0);
    var hotRow = Number(f.ref.slice(1));
    var rows = f.hotRows || [hotRow, hotRow];
    var html = '<div class="row head"><div class="cell no"><div class="corner"></div></div>';
    cols.forEach(function (l) {
        var cls = l === hotCol ? ' hot' : l === f.over ? ' over' : '';
        html += '<div class="cell w-' + l + cls + '">' + (f.shifted && l === 'A' ? '' : l) + '</div>';
    });
    html += '</div>';
    for (var n = 1; n < 30; n++) {
        html += '<div class="row' + (n < 9 ? ' top' : n === 9 ? ' tall' : '') + '">';
        html += '<div class="cell no' + (n >= rows[0] && n <= rows[1] ? ' hot' : '') + '">' + n + '</div>';
        cols.forEach(function (l) {
            var cell = cells[l + n];
            html += '<div class="cell w-' + l + (cell ? ' ' + cell[1] : '') + '">' + (cell ? '<span>' + cell[0] + '</span>' : '') + '</div>';
        });
        html += '</div>';
    }
    return html;
}

function group(name, label, body, launcher) {
    return '<div class="group ' + name + '"><div class="body">' + body + '</div><div class="label"><span>' + label + '</span>' + (launcher ? '<i></i>' : '') + '</div></div>';
}

function big(id, one, two, cls) {
    return '<div class="big dim ' + (cls || '') + '">' + icon(id) + '<span>' + one + '</span><span class="dd">' + (two || '') + '</span></div>';
}

function ribbon(f) {
    var pick = '<span class="pick"></span>';
    return '<div class="ribbon">' +
        group('clip', 'Clipboard',
            big('paste', 'Paste', '', 'paste') +
            '<div class="list"><div class="line">' + icon('cut', 's') + 'Cut</div>' +
            '<div class="line">' + icon('copy', 's') + '<span class="dd">Copy</span></div>' +
            '<div class="line">' + icon('brush', 's') + 'Format Painter</div></div>', true) +
        group('font', 'Font',
            '<div class="line l1 dim"><div class="combo"><span>' + (f.editing ? '' : 'Calibri') + '</span>' + pick + '</div><div class="combo"><span>11</span>' + pick + '</div><span class="grow">A&#710;</span><span>A&#711;</span></div>' +
            '<div class="line l2 dim"><b class="' + (f.bold ? 'on' : '') + '">B</b><i>I</i><u>U</u>' + pick + icon('grid') + pick + icon('bucket') + pick + '<b class="ink">A</b>' + pick + '</div>', true) +
        group('align', 'Alignment',
            '<div class="line l1 dim">' + icon('line2') + (f.bold ? '<div class="on">' + icon('line2') + '</div>' + icon('line2') : icon('line2') + '<div class="' + (f.editing ? '' : 'on') + '">' + icon('line2') + '</div>') + icon('orient') + pick + '<span></span>' + icon('wrap') + '<span>Wrap Text</span></div>' +
            '<div class="line l2 dim">' + icon('lines') + (f.bold ? '<div class="on">' + icon('lines') + '</div>' : icon('lines')) + icon('lines') + icon('indent') + icon('indent') + '<span></span>' + icon('merge') + '<span class="dd">Merge &amp; Center</span></div>', true) +
        group('num', 'Number',
            '<div class="line dim"><div class="combo"><span>' + f.format + '</span>' + pick + '</div></div>' +
            '<div class="line l2 dim"><span>$</span>' + pick + '<span>%</span><b>&#8217;</b><span></span>' + icon('decimals') + icon('decimals', 'flip') + '</div>', true) +
        group('styles', 'Styles',
            big('cond', 'Conditional', 'Formatting') + big('table', 'Format as', 'Table') + '<div></div>' +
            '<div class="gallery"><span class="normal">Normal</span><span class="bad">Bad</span><span class="good">Good</span>' +
            '<span class="neutral">Neutral</span><span class="calc">Calculation</span><span class="check">Check Cell</span></div>' +
            '<div class="spin">' + pick + pick + pick + '</div>') +
        group('cells', 'Cells', big('insert', 'Insert') + big('delete', 'Delete') + big('format', 'Format')) +
        group('edit', 'Editing',
            '<div class="list"><div class="line"><span class="sigma">&Sigma;</span><span class="dd">AutoSum</span></div>' +
            '<div class="line dim">' + icon('fill') + '<span class="dd">Fill</span></div>' +
            '<div class="line">' + icon('clear') + '<span class="dd">Clear</span></div></div>' +
            big('sort', 'Sort &amp;', 'Filter') + big('find', 'Find &amp;', 'Select').replace(' dim', '')) +
        '<div class="group tail"><i class="chev"></i></div></div>';
}

function radio(label, cls) {
    return '<label class="' + (cls || '') + '"><i></i><span>' + label + '</span></label>';
}

function dialog() {
    return '<div class="dialog"><div class="bar"><span>Paste Special</span><span>?</span>' + icon('close') + '</div>' +
        '<div class="cap">Paste</div><div class="opts">' +
        radio('<u>A</u>ll', 'on') + radio('All using Source t<u>h</u>eme') +
        radio('<u>F</u>ormulas') + radio('All e<u>x</u>cept borders') +
        radio('<u>V</u>alues') + radio('Column <u>w</u>idths') +
        radio('Forma<u>t</u>s') + radio('Fo<u>r</u>mulas and number formats') +
        radio('<u>C</u>omments') + radio('Val<u>u</u>es and number formats') +
        radio('Validatio<u>n</u>') + radio('All mer<u>g</u>ing conditional formats', 'off') + '</div>' +
        '<div class="cap">Operation</div><div class="opts">' +
        radio('N<u>o</u>ne', 'on') + radio('<u>M</u>ultiply') + radio('A<u>d</u>d') + radio('D<u>i</u>vide') + radio('<u>S</u>ubtract') + '</div>' +
        '<div class="opts checks">' + radio('Skip <u>b</u>lanks') + radio('Transpos<u>e</u>') + '</div>' +
        '<div class="btns"><span>Paste Link</span><span class="ok">OK</span><span>Cancel</span></div></div>';
}

function book(f) {
    var p = f.pointer;
    var cls = ['editing', 'nopaste', 'wide', 'shifted'].filter(function (k) { return f[k]; }).join(' ');
    return '<section class="book ' + cls + (f.dialog ? ' inactive' : '') + '">' +
        '<div class="titlebar">' + icon('save') + icon('undo') + '<span>&middot;</span>' + icon('redo', 'faint') + icon('save') + '<span>&middot;</span>' +
        '<span class="name">02_07_Begin&nbsp; [Compatibility Mode] - Excel</span>' +
        icon('ribbon-opts', 'win') + '<span class="win">&ndash;</span>' + icon('restore', 'win') + icon('close', 'win') + '</div>' +
        '<div class="tabs"><span>File</span><span class="active">Home</span><span>Insert</span><span>Page Layout</span><span>Formulas</span><span>Data</span><span>Review</span><span>View</span>' +
        icon('bulb') + '<span class="tell">Tell me what you want to do...</span><span>Sign in</span><span class="share">' + icon('person') + 'Share</span></div>' +
        ribbon(f) +
        '<div class="formula"><div class="ref"><span>' + (f.name || f.ref) + '</span><span class="pick"></span></div><div class="dots">&#8942;</div>' +
        '<div class="fx"><span>&#10005;</span><span>&#10003;</span><i>fx</i></div>' +
        '<div class="text"><span class="' + (f.editing ? 'caret' : '') + '">' + f.text + '</span><i class="chev down"></i></div></div>' +
        '<div class="pane"><div class="grid">' + sheet(f) + '</div>' +
        '<div class="vscroll"><div class="btn">&#9650;</div><div class="thumb"></div><div class="btn">&#9660;</div></div></div>' +
        '<div class="strip"><span>&lsaquo; &nbsp; &rsaquo;</span><span class="sheet">Ch2</span><span class="plus">+</span><span></span><span>&#8942;</span><span class="btn">&#9664;</span>' +
        '<div class="track"><div class="thumb" style="width:' + f.thumb + 'px"></div></div><span class="btn">&#9654;</span></div>' +
        '<div class="status"><span class="msg">' + (f.msg || 'Select destination and press ENTER or choose Paste') + '</span><span class="sum">' + (f.sum || '') + '</span>' +
        '<span class="on">' + icon('view-grid') + '</span>' + icon('view-page') + icon('view-break') +
        '<b class="z">&minus;</b><span class="zoom z"><i></i></span><b class="z">+</b><span class="z">100%</span></div>' +
        '<div class="base"></div>' +
        (f.tip ? '<div class="tip">' + f.tip + '</div>' : '') +
        (f.dialog ? dialog() : '') +
        (f.keys ? '<div class="paste-tags"><div>' + icon('paste') + '(Ctrl) <span class="dd"></span></div><div>' + icon('paste') + '</div></div>' +
            '<div class="keys"><span>win</span><span>ctrl + 1</span><span>mac</span><span>cmd + 1</span></div>' : '') +
        '<svg class="pointer ' + p[0] + '" style="left:' + p[1] + 'px;top:' + p[2] + 'px"><use href="#' + p[0] + '"/></svg>' +
        '<div class="watermark">Linked<span>in</span></div></section>';
}

document.querySelector('.wall').insertAdjacentHTML('beforeend', frames.map(book).join(''));
```
